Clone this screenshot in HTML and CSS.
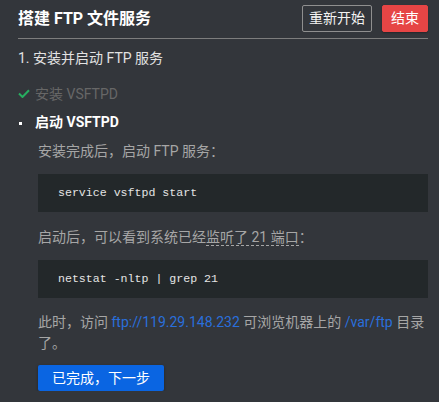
FILE: index.html
```html
<!DOCTYPE html>
<html lang="zh-CN">
<head>
<meta charset="utf-8">
<title>搭建 FTP 文件服务</title>
<link rel="stylesheet" href="styles.css">
</head>
<body>
<div class="panel">
  <header class="header">
    <h1 class="title">搭建 FTP 文件服务</h1>
    <div class="actions">
      <button class="btn btn-outline">重新开始</button>
      <button class="btn btn-danger">结束</button>
    </div>
  </header>
  <h2 class="section">1. 安装并启动 FTP 服务</h2>
  <ul class="steps">
    <li class="step done">
      <svg class="check" width="12" height="9" viewBox="0 0 12 9"><path d="M1 4.5 L4.5 8 L11 1.2" fill="none" stroke="#27ae60" stroke-width="2"/></svg>
      <span>安装 VSFTPD</span>
    </li>
    <li class="step active">
      <span class="dot"></span>
      <span>启动 VSFTPD</span>
    </li>
  </ul>
  <div class="content">
    <p class="text first">安装完成后，启动 FTP 服务：</p>
    <pre class="code">service vsftpd start</pre>
    <p class="text">启动后，可以看到系统已经<span class="hint">监听了 21 端口</span>：</p>
    <pre class="code">netstat -nltp | grep 21</pre>
    <p class="text para">此时，访问 <a class="link" href="#">ftp://119.29.148.232</a> 可浏览机器上的 <a class="link" href="#">/var/ftp</a> 目录了。</p>
    <button class="btn btn-primary">已完成，下一步</button>
  </div>
</div>
</body>
</html>
```

FILE: styles.css
```css
html, body {
  margin: 0;
  padding: 0;
  background: #33363b;
}
body {
  font-family: "Roboto", "Noto Sans CJK SC", sans-serif;
  color: #a6a6a6;
  font-size: 14px;
}
.panel {
  padding: 0 11px 0 18px;
}
.header {
  display: flex;
  align-items: center;
  justify-content: space-between;
  padding: 5px 0 6px;
  border-bottom: 1px solid #7d7d7d;
}
.title {
  margin: 0;
  font-size: 16px;
  font-weight: bold;
  color: #ffffff;
  line-height: 27px;
}
.actions {
  display: flex;
  gap: 10px;
}
.btn {
  font-family: "Roboto", "Noto Sans CJK SC", sans-serif;
  font-size: 14px;
  height: 27px;
  line-height: 25px;
  border-radius: 2px;
  cursor: pointer;
  padding: 0;
}
.btn-outline {
  width: 70px;
  background: transparent;
  border: 1px solid #8f8f8f;
  color: #f2f2f2;
}
.btn-danger {
  width: 46px;
  background: #e64545;
  border: 1px solid #e64545;
  color: #ffffff;
  box-shadow: 0 1px 2px rgba(0,0,0,0.3);
}
.section {
  margin: 9px 0 0;
  font-size: 14px;
  font-weight: normal;
  line-height: 20px;
  color: #e2e2e2;
}
.steps {
  list-style: none;
  margin: 11px 0 0;
  padding: 0;
}
.step {
  display: flex;
  align-items: center;
  height: 28px;
  font-size: 14px;
}
.step.done {
  color: #676767;
}
.check {
  margin-right: 5px;
}
.step.active {
  color: #ffffff;
  font-weight: bold;
}
.dot {
  width: 3px;
  height: 3px;
  background: #ffffff;
  margin: 4px 13px 0 1px;
}
.step.done .check {
  margin-left: 0;
}
.content {
  padding-left: 20px;
}
.text {
  margin: 14px 0 0;
  line-height: 22px;
  color: #a6a6a6;
}
.text.first {
  margin-top: 5px;
}
.hint {
  border-bottom: 1px dashed #a6a6a6;
}
.code {
  margin: 11px 0 0;
  background: #23282a;
  color: #e4e4e4;
  font-family: "Liberation Mono", monospace;
  font-size: 11.6px;
  line-height: 20px;
  padding: 9px 20px;
}
.text + .code {
  margin-top: 12px;
}
.code + .text {
  margin-top: 14px;
}
.para {
  line-height: 21px;
}
.link {
  color: #2a6fdb;
  text-decoration: none;
}
.btn-primary {
  display: block;
  margin-top: 11px;
  width: 126px;
  height: 26px;
  line-height: 26px;
  background: #0a65e2;
  border: none;
  color: #ffffff;
  box-shadow: 0 1px 3px rgba(0,0,0,0.35);
}
```
